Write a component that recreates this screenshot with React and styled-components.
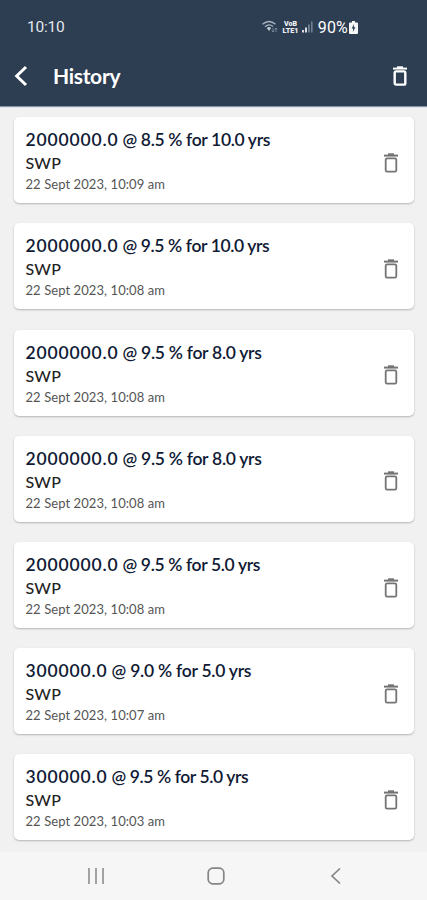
import styled, { createGlobalStyle } from "styled-components";

const historico = [
  { valor: "2000000.0", detalhe: "@ 8.5 % for 10.0 yrs", data: "22 Sept 2023, 10:09 am", espaco: "-0.35px" },
  { valor: "2000000.0", detalhe: "@ 9.5 % for 10.0 yrs", data: "22 Sept 2023, 10:08 am", espaco: "-0.38px" },
  { valor: "2000000.0", detalhe: "@ 9.5 % for 8.0 yrs", data: "22 Sept 2023, 10:08 am", espaco: "-0.28px" },
  { valor: "2000000.0", detalhe: "@ 9.5 % for 8.0 yrs", data: "22 Sept 2023, 10:08 am", espaco: "-0.28px" },
  { valor: "2000000.0", detalhe: "@ 9.5 % for 5.0 yrs", data: "22 Sept 2023, 10:08 am", espaco: "-0.36px" },
  { valor: "300000.0", detalhe: "@ 9.0 % for 5.0 yrs", data: "22 Sept 2023, 10:07 am", espaco: "-0.25px" },
  { valor: "300000.0", detalhe: "@ 9.5 % for 5.0 yrs", data: "22 Sept 2023, 10:03 am", espaco: "-0.4px" },
];

const Lixeira = ({ traco = 1.8 }) => (
  <svg width="16" height="20" viewBox="0 0 16 20" fill="none" stroke="currentColor">
    <path d="M1 2.600H15" strokeWidth="2" />
    <path d="M5 1.200H11" strokeWidth="1.800" />
    <rect x="2.700" y="5.400" width="10.600" height="13.200" rx="1.400" strokeWidth={traco} />
  </svg>
);

const IconesDeStatus = () => (
  <svg width="51" height="14" viewBox="0 0 51 14" fill="none">
    <g stroke="#a9b4c0" strokeWidth="1.3">
      <path d="M.5 4.200Q7 -1.200 13.500 4.200" />
      <path d="M3 6.800Q7 3.200 11 6.500" />
    </g>
    <path d="M4.800 8Q7 6 9.200 8L7 11Z" fill="#c3cbd4" />
    <path d="M11 8v4m-1.200-1.300L11 12l1.200-1.300M14 12V8m-1.200 1.300L14 8l1.200 1.300" stroke="#8795a5" strokeWidth=".8" />
    <text x="22" y="6" textLength="13" lengthAdjust="spacingAndGlyphs" fill="#eef1f4" fontFamily="Roboto, sans-serif" fontSize="7" fontWeight="900">VoB</text>
    <text x="20.500" y="12.600" textLength="16" lengthAdjust="spacingAndGlyphs" fill="#eef1f4" fontFamily="Roboto, sans-serif" fontSize="7" fontWeight="900">LTE1</text>
    <path d="M40 10h2v2.500h-2zM43 7.500h2v5h-2z" fill="#d7dde3" />
    <path d="M46 4.500h1.800v8H46zM49 1.500h1.600v11H49z" fill="#708092" />
  </svg>
);

const Bateria = () => (
  <svg width="9" height="13" viewBox="0 0 9 13">
    <path d="M3 0h3v1.500h2a1 1 0 0 1 1 1V12a1 1 0 0 1-1 1H1a1 1 0 0 1-1-1V2.500a1 1 0 0 1 1-1h2z" fill="#f5f6f8" />
    <path d="M5 3L2.700 7.500h1.500L3.800 11l2.700-4.800H4.800z" fill="#2d3d52" />
  </svg>
);

const App = () => {
  return (
    <>
      <EstiloGlobal />
      <Tela>
        <Cabecalho>
          <BarraDeStatus>
            <Hora>10:10</Hora>
            <Indicadores>
              <IconesDeStatus />
              <Porcentagem>90%</Porcentagem>
              <Bateria />
            </Indicadores>
          </BarraDeStatus>
          <BarraDoApp>
            <BotaoIcone aria-label="Back">
              <svg width="14" height="22" viewBox="0 0 14 22" fill="none" stroke="#fff" strokeWidth="3">
                <path d="M12 2L2.700 11L12 20" />
              </svg>
            </BotaoIcone>
            <h1>History</h1>
            <BotaoIcone aria-label="Delete all">
              <Lixeira traco={2.4} />
            </BotaoIcone>
          </BarraDoApp>
        </Cabecalho>
        <Lista>
          {historico.map((item, index) => (
            <Cartao key={index}>
              <Info>
                <h2>
                  <Valor>{item.valor}</Valor>
                  <Detalhe $espaco={item.espaco}> {item.detalhe}</Detalhe>
                </h2>
                <h3>SWP</h3>
                <p>{item.data}</p>
              </Info>
              <BotaoIcone $cor="#747474" aria-label="Delete">
                <Lixeira />
              </BotaoIcone>
            </Cartao>
          ))}
        </Lista>
        <Navegacao>
          <svg width="18" height="18" viewBox="0 0 18 18" stroke="#999" strokeWidth="1.800">
            <path d="M2 1V17M9 1V17M16 1V17" />
          </svg>
          <svg width="18" height="18" viewBox="0 0 18 18" fill="none" stroke="#858585" strokeWidth="1.700">
            <rect x="1.200" y="1.200" width="15.600" height="15.600" rx="4.500" />
          </svg>
          <svg width="18" height="18" viewBox="0 0 18 18" fill="none" stroke="#858585" strokeWidth="1.700">
            <path d="M13 1.500L5 9L13 16.500" />
          </svg>
        </Navegacao>
      </Tela>
    </>
  );
};

const EstiloGlobal = createGlobalStyle`
  * {
    box-sizing: border-box;
  }
  body {
    margin: 0;
    background-color: #f1f1f1;
    font-family: Lato, "Liberation Sans", sans-serif;
  }
  h1, h2, h3, p {
    margin: 0;
  }
  svg {
    display: block;
  }
`;

const Tela = styled.div`
  display: flex;
  flex-direction: column;
  height: 900px;
  overflow: hidden;
`;

const Cabecalho = styled.header`
  height: 106px;
  flex: none;
  color: #fff;
  background-color: #2d3d52;
  box-shadow: 0 1px 1px #8795a5;
`;

const BarraDeStatus = styled.div`
  display: flex;
  justify-content: space-between;
  align-items: center;
  height: 54px;
  padding: 0 69px 0 27px;
  font-family: Roboto, sans-serif;
`;

const Hora = styled.span`
  font-size: 15.5px;
  letter-spacing: -0.2px;
  color: #e3e8ed;
`;

const Indicadores = styled.div`
  display: flex;
  align-items: center;
`;

const Porcentagem = styled.span`
  margin: 0 1px 0 5px;
  font-size: 16px;
  letter-spacing: 0.2px;
`;

const BarraDoApp = styled.div`
  display: flex;
  align-items: center;
  height: 44px;
  padding: 0 19px 0 14px;
  h1 {
    flex: 1;
    padding-left: 25px;
    font-size: 21px;
    line-height: 26px;
    font-weight: 700;
    letter-spacing: -0.3px;
  }
`;

const BotaoIcone = styled.button`
  padding: 0;
  border: none;
  background: none;
  color: ${({ $cor }) => $cor || "#fff"};
  cursor: pointer;
`;

const Lista = styled.main`
  display: flex;
  flex: 1;
  flex-direction: column;
  gap: 20.2px;
  padding: 11.3px 13px 0 14px;
`;

const Cartao = styled.article`
  display: flex;
  flex: none;
  justify-content: space-between;
  height: 86px;
  padding: 0 15px 0 11.5px;
  align-items: center;
  border-radius: 5px;
  background-color: #fff;
  box-shadow: 0 1px 2px rgba(0, 0, 0, 0.25);
  ${BotaoIcone} {
    margin-top: 5px;
  }
`;

const Info = styled.div`
  padding-top: 2px;
  white-space: nowrap;
  h2 {
    color: #101a35;
    font-size: 17.5px;
    line-height: 25px;
    font-weight: 600;
  }
  h3 {
    color: #222;
    font-size: 16px;
    line-height: 22px;
    font-weight: 500;
    letter-spacing: 0.2px;
  }
  p {
    color: #555;
    font-size: 13px;
    line-height: 21px;
    letter-spacing: 0.08px;
  }
`;

const Valor = styled.span`
  letter-spacing: 0.85px;
`;

const Detalhe = styled.span`
  letter-spacing: ${({ $espaco }) => $espaco};
`;

const Navegacao = styled.nav`
  display: flex;
  justify-content: space-between;
  align-items: center;
  flex: none;
  height: 48px;
  padding: 0 82px 0 87px;
  background-color: #f6f6f6;
`;

export default App;
